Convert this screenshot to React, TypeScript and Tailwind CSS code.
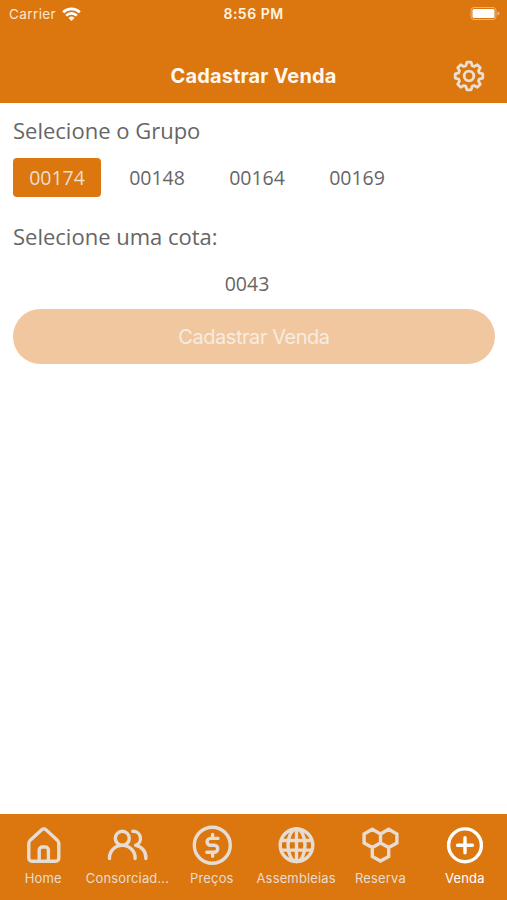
import { ReactNode, useState } from 'react';
import clsx from 'clsx';

const groups = ['00174', '00148', '00164', '00169'];

const tabs: { label: string; icon: ReactNode }[] = [
  {
    label: 'Home',
    icon: (
      <>
        <path d="M5.800 18.500a4 4 0 0 1 1.200-2.900L18.500 4.900a3.300 3.300 0 0 1 4.600 0L34.600 15.600a4 4 0 0 1 1.200 2.900v14.800a3 3 0 0 1-3 3h-24a3 3 0 0 1-3-3z" />
        <path d="M16.200 36.300V25a3 3 0 0 1 3-3h3.200a3 3 0 0 1 3 3v11.300" />
      </>
    ),
  },
  {
    label: 'Consorciad...',
    icon: (
      <>
        <circle cx="15.300" cy="13.300" r="7" />
        <path d="M2.500 33.500v-.8a12.800 12.300 0 0 1 25.600 0v.8M25.800 6.300a7.200 7.200 0 0 1 2.800 14a12.500 12.500 0 0 1 10.300 13.200" />
      </>
    ),
  },
  {
    label: 'Preços',
    icon: (
      <>
        <circle cx="20.300" cy="20.300" r="18" />
        <path d="M26 13.400h-7.500a3.400 3.400 0 0 0 0 6.900h3.800a3.400 3.400 0 0 1 0 6.900h-7.500M20.600 9.400v4M20.600 27.200v4" />
      </>
    ),
  },
  {
    label: 'Assembleias',
    icon: (
      <>
        <circle cx="20.500" cy="20.300" r="16.300" />
        <ellipse cx="20.500" cy="20.300" rx="8.500" ry="16.300" />
        <path d="M20.500 4v32.600M5.600 15.500h29.800M5.600 25.100h29.800" />
      </>
    ),
  },
  {
    label: 'Reserva',
    icon: (
      <path
        strokeLinejoin="miter"
        d="M12.300 4.300l8.200 4.600v9l-8.200 4.600l-8.200-4.600v-9zM28.700 4.300l8.200 4.600v9l-8.200 4.600l-8.200-4.600v-9zM20.500 17.900l8.200 4.600v9l-8.200 4.600l-8.200-4.600v-9z"
      />
    ),
  },
  {
    label: 'Venda',
    icon: (
      <>
        <circle cx="20" cy="20.300" r="16.400" />
        <path d="M20 12.800v15M12.500 20.300h15" />
      </>
    ),
  },
];

function StatusBar() {
  return (
    <div className="flex h-7 items-center justify-between pl-[9px] pr-[6px] text-[13.5px]">
      <div className="flex w-[100px] items-center gap-[6px] text-[#fbe6d0]">
        <span className="tracking-[0.4px]">Carrier</span>
        <svg width="19" height="15" viewBox="0 0 19 15" fill="none" stroke="white" strokeWidth="2.700">
          <path d="M1.200 5.300a12 12 0 0 1 16.600 0M4.200 8.600a7.600 7.600 0 0 1 10.600 0" />
          <path d="M6.500 11a4.300 4.300 0 0 1 6 0l-3 3z" fill="white" stroke="none" />
        </svg>
      </div>
      <span className="-ml-[3px] pb-0.5 text-[14px] font-semibold tracking-[0.5px] text-[#fff3e3]">8:56 PM</span>
      <div className="flex w-[100px] justify-end">
        <svg width="31" height="15" viewBox="0 0 31 15" fill="none">
          <rect x="1" y="0.500" width="25" height="12" rx="3" stroke="#efb57d" />
          <rect x="2.500" y="2" width="22" height="9" rx="1.500" fill="white" />
          <path d="M27.500 4.500v4q2-.5 2-2t-2-2z" fill="#efb57d" />
        </svg>
      </div>
    </div>
  );
}

function GearIcon() {
  return (
    <svg width="32" height="32" viewBox="0 0 32 32" fill="none" stroke="#eadfd2" strokeWidth="2.800" strokeLinejoin="round">
      <circle cx="16" cy="16" r="4.800" />
      <path d="M13.900 2.200h4.200l1 3.500 2 .8 3.200-1.800 3 3-1.800 3.200.8 2 3.500 1v4.200l-3.500 1-.8 2 1.800 3.200-3 3-3.200-1.800-2 .8-1 3.500h-4.200l-1-3.500-2-.8-3.200 1.800-3-3 1.800-3.200-.8-2-3.500-1v-4.200l3.500-1 .8-2-1.800-3.200 3-3 3.200 1.800 2-.8z" />
    </svg>
  );
}

export default function App() {
  const [group, setGroup] = useState('00174');
  const [activeTab, setActiveTab] = useState('Venda');

  return (
    <div className="flex h-[900px] w-[507px] flex-col overflow-hidden bg-white font-[Inter,sans-serif]">
      <header className="h-[103px] bg-[#dc760f]">
        <StatusBar />
        <div className="grid h-[75px] grid-cols-[1fr_auto_1fr] items-center pt-5 pr-[22px]">
          <span />
          <h1 className="pl-[22px] text-[20px] font-bold tracking-[0.15px] text-[#fff8ee]">Cadastrar Venda</h1>
          <button type="button" className="justify-self-end" aria-label="Configurações">
            <GearIcon />
          </button>
        </div>
      </header>

      <main className="flex flex-1 flex-col pl-[13px] pr-3 font-['Open_Sans',sans-serif] text-[#666]">
        <h2 className="mt-3 text-[22px] leading-[30px]">Selecione o Grupo</h2>
        <div className="mt-[13px] flex gap-3">
          {groups.map((item) => (
            <button
              key={item}
              type="button"
              onClick={() => setGroup(item)}
              className={clsx(
                'h-[39px] w-[88px] rounded text-[19.5px]',
                item === group ? 'bg-[#dc760f] text-[#eadfd2]' : 'text-[#666]'
              )}
            >
              {item}
            </button>
          ))}
        </div>
        <h2 className="mt-6 text-[22px] leading-[30px]">Selecione uma cota:</h2>
        <div className="mt-[18px] pr-[14px] text-center text-[19.5px] leading-[30px]">0043</div>
        <button
          type="button"
          disabled
          className="mt-[10px] h-[55px] w-full rounded-full bg-[#f1c79f] font-[Inter,sans-serif] text-[20px] tracking-[-0.45px] text-[#f6ece2]"
        >
          Cadastrar Venda
        </button>
      </main>

      <nav className="grid h-[86px] grid-cols-6 bg-[#dc760f] pl-px">
        {tabs.map(({ label, icon }) => (
          <button
            key={label}
            type="button"
            onClick={() => setActiveTab(label)}
            className={clsx('flex flex-col items-center pt-[11px]', label === activeTab ? 'text-white' : 'text-[#e6dcd2]')}
          >
            <svg
              width="40"
              height="40"
              viewBox="0 0 40 40"
              fill="none"
              stroke="currentColor"
              strokeWidth="3.400"
              strokeLinecap="round"
              strokeLinejoin="round"
              className="overflow-visible"
            >
              {icon}
            </svg>
            <span className="mt-[3px] whitespace-nowrap text-[13px] leading-5 tracking-[0.15px]">{label}</span>
          </button>
        ))}
      </nav>
    </div>
  );
}
